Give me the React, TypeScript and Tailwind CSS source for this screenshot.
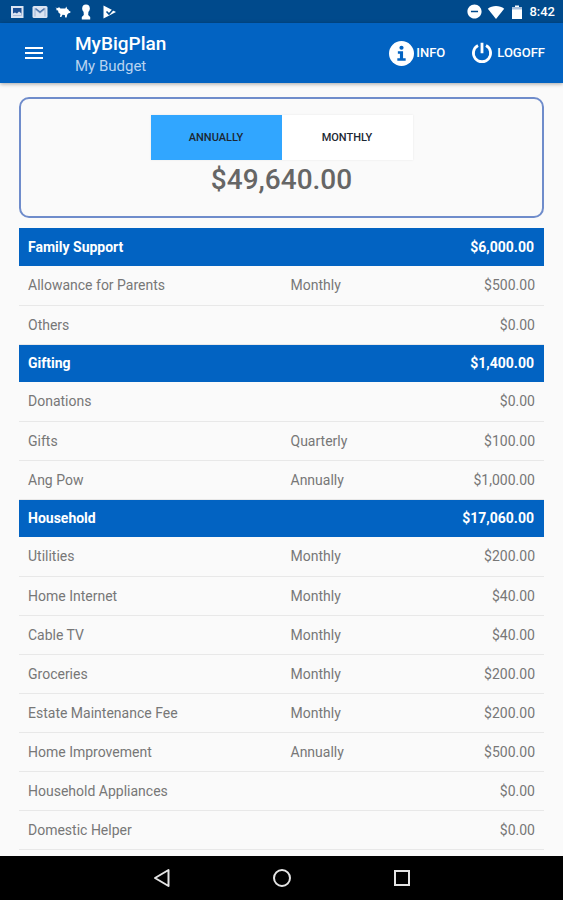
import React, { useState } from 'react';
import { MdMenu, MdRemoveCircle } from 'react-icons/md';

type Period = 'annually' | 'monthly';

interface BudgetItem {
  name: string;
  frequency?: string;
  amount: string;
}

interface BudgetGroup {
  name: string;
  total: string;
  items: BudgetItem[];
}

const groups: BudgetGroup[] = [
  {
    name: 'Family Support',
    total: '$6,000.00',
    items: [
      { name: 'Allowance for Parents', frequency: 'Monthly', amount: '$500.00' },
      { name: 'Others', amount: '$0.00' },
    ],
  },
  {
    name: 'Gifting',
    total: '$1,400.00',
    items: [
      { name: 'Donations', amount: '$0.00' },
      { name: 'Gifts', frequency: 'Quarterly', amount: '$100.00' },
      { name: 'Ang Pow', frequency: 'Annually', amount: '$1,000.00' },
    ],
  },
  {
    name: 'Household',
    total: '$17,060.00',
    items: [
      { name: 'Utilities', frequency: 'Monthly', amount: '$200.00' },
      { name: 'Home Internet', frequency: 'Monthly', amount: '$40.00' },
      { name: 'Cable TV', frequency: 'Monthly', amount: '$40.00' },
      { name: 'Groceries', frequency: 'Monthly', amount: '$200.00' },
      { name: 'Estate Maintenance Fee', frequency: 'Monthly', amount: '$200.00' },
      { name: 'Home Improvement', frequency: 'Annually', amount: '$500.00' },
      { name: 'Household Appliances', amount: '$0.00' },
      { name: 'Domestic Helper', amount: '$0.00' },
    ],
  },
];

const periods: { id: Period; label: string }[] = [
  { id: 'annually', label: 'ANNUALLY' },
  { id: 'monthly', label: 'MONTHLY' },
];

const StatusBar: React.FC = () => (
  <div className="flex h-[23px] items-center justify-between bg-[#004a8c] pl-[9px] pr-2 text-white">
    <div className="flex items-center gap-[7px]">
      {/* picture */}
      <svg viewBox="0 0 16 16" className="h-4 w-4">
        <path d="M2 2h12.500v12H2z" fill="#dbe4f2" />
        <path d="M4 4h8.500v7.500H4z" fill="#1c4f93" />
        <path d="M4 11.600V9.600l2-1.200 2 1.200 2-2.200 2.500 2v2.200z" fill="#dbe4f2" />
      </svg>
      {/* mail */}
      <svg viewBox="0 0 16 16" className="h-4 w-4">
        <rect x="0.5" y="2" width="15" height="12" rx="1.5" fill="#dbe4f2" />
        <path d="M3 12.500V5l5 4 5-4v7.500" fill="none" stroke="#a9bcd9" strokeWidth="1.2" />
        <path d="M3.500 4.500 8 8l4.500-3.500" fill="none" stroke="#4d75aa" strokeWidth="1.4" />
      </svg>
      {/* pig */}
      <svg viewBox="0 0 16 16" className="h-4 w-4" fill="white">
        <path d="M.5 3.200 2 4.200l2.200-.9 1.300 1.200h4.800l1-2 .8 2.200 1.400 1 .6 1.300 1.400.4-.2 1.300-1.800.5-1.200 1.200-.7 3.200h-1.400l-.4-2.600-2.300-.3-1.200 2.200H5l.4-2.800-1.800-1.300-.6-2.400L.8 5.900l1-.7z" />
      </svg>
      {/* keyhole figure */}
      <svg viewBox="0 0 16 16" className="h-4 w-4" fill="white">
        <circle cx="8" cy="4.400" r="3.800" />
        <path d="M5.500 6.500h5l-.3 4.500 2 2V15.500H3.800V13l2-2z" />
      </svg>
      {/* play store check */}
      <svg viewBox="0 0 16 16" className="h-4 w-4">
        <path d="M2.500 1.500 15 8 2.500 14.500z" fill="white" />
        <path d="m5.500 7.500 2.500 2.500 5.500-6" fill="none" stroke="#004a8c" strokeWidth="1.600" />
      </svg>
    </div>
    <div className="flex items-center gap-1">
      <MdRemoveCircle className="h-[17px] w-[17px]" />
      {/* wifi */}
      <svg viewBox="0 0 18 16" className="h-4 w-[18px]" fill="white">
        <path d="M9 15 .8 4.800C3 3 6 2 9 2s6 1 8.200 2.800z" />
      </svg>
      {/* battery */}
      <svg viewBox="0 0 16 16" className="h-4 w-4" fill="white">
        <path d="M6 1.500h4V3h3v12H3V3h3z" />
        <path d="M3 3h10v2.500H3z" fill="#a9c0dc" />
      </svg>
      <span className="text-[13px] leading-4 font-medium">8:42</span>
    </div>
  </div>
);

const AppBar: React.FC = () => (
  <header className="z-10 flex h-[60px] items-center bg-[#0263c2] pl-[22px] pr-[18px] text-white shadow-[0_1px_4px_rgba(0,0,0,0.35)]">
    <button type="button" aria-label="Menu">
      <MdMenu className="h-6 w-6" />
    </button>
    <div className="ml-[29px] flex-1 pt-1">
      <h1 className="text-[19px] leading-[22px] font-medium">MyBigPlan</h1>
      <p className="text-[15px] leading-[22px] text-[#b8d3f0]">My Budget</p>
    </div>
    <div className="flex items-center gap-[26px] text-[13px] font-medium">
      <button type="button" className="flex items-center gap-0.5">
        <svg viewBox="0 0 24 24" className="h-[25px] w-[25px]">
          <circle cx="12" cy="12" r="12" fill="white" />
          <circle cx="12" cy="6.500" r="2" fill="#0263c2" />
          <path d="M8.500 9.800h5v6.700H16V19H8v-2.500h2.500v-4.200h-2z" fill="#0263c2" />
        </svg>
        INFO
      </button>
      <button type="button" className="flex items-center gap-1">
        <svg viewBox="0 0 22 22" className="h-[22px] w-[22px]" fill="none" stroke="currentColor" strokeWidth="2.800">
          <path d="M7 3.500a8.600 8.600 0 1 0 8 0M11 .8v10.400" />
        </svg>
        LOGOFF
      </button>
    </div>
  </header>
);

const NavigationBar: React.FC = () => (
  <nav className="flex h-11 items-center justify-center gap-24 bg-black text-[#e4e4e4]">
    <button type="button" aria-label="Back">
      <svg viewBox="0 0 24 24" className="h-6 w-6" fill="none" stroke="currentColor" strokeWidth="2" strokeLinejoin="round">
        <path d="M18.500 4v16L5 12z" />
      </svg>
    </button>
    <button type="button" aria-label="Home">
      <svg viewBox="0 0 24 24" className="h-6 w-6" fill="none" stroke="currentColor" strokeWidth="2">
        <circle cx="12" cy="12" r="8" />
      </svg>
    </button>
    <button type="button" aria-label="Recent apps">
      <svg viewBox="0 0 24 24" className="h-6 w-6" fill="none" stroke="currentColor" strokeWidth="2">
        <rect x="5" y="5" width="14" height="14" />
      </svg>
    </button>
  </nav>
);

const BudgetTable: React.FC = () => (
  <table className="mt-2.5 w-full table-fixed text-left text-sm text-[#777777]">
    <colgroup>
      <col className="w-1/2" />
      <col className="w-1/4" />
      <col className="w-1/4" />
    </colgroup>
    {groups.map((group) => (
      <tbody key={group.name}>
        <tr className="h-[38px] bg-[#0263c2] text-white">
          <th scope="rowgroup" colSpan={2} className="px-[9px] font-bold">
            {group.name}
          </th>
          <td className="px-[10px] text-right font-bold">{group.total}</td>
        </tr>
        {group.items.map((item) => (
          <tr key={item.name} className="h-[39px] border-b border-[#e8e8e8]">
            <th scope="row" className="px-[9px] font-normal">
              {item.name}
            </th>
            <td className="px-[9px]">{item.frequency}</td>
            <td className="px-[9px] text-right">{item.amount}</td>
          </tr>
        ))}
      </tbody>
    ))}
  </table>
);

const App: React.FC = () => {
  const [period, setPeriod] = useState<Period>('annually');

  const tabClasses = (isActive: boolean) =>
    `h-[45px] w-[131px] pt-0.5 text-[11px] font-medium text-[#1c2733] ${isActive ? 'bg-[#31a6ff]' : 'bg-white'}`;

  return (
    <div className="flex min-h-screen flex-col bg-[#fafafa] font-[Roboto,sans-serif]">
      <StatusBar />
      <AppBar />
      <main className="flex-1 px-[19px] pt-3.5">
        <section className="flex flex-col items-center rounded-[10px] border-2 border-[#6f8ccb] pt-4 pb-5">
          <div className="flex shadow-[0_0_2px_rgba(0,0,0,0.08)]">
            {periods.map((p) => (
              <button
                key={p.id}
                type="button"
                aria-pressed={period === p.id}
                onClick={() => setPeriod(p.id)}
                className={tabClasses(period === p.id)}
              >
                {p.label}
              </button>
            ))}
          </div>
          <p className="mt-1 text-[28px] leading-8 font-medium text-[#666666]">
            {period === 'annually' ? '$49,640.00' : '$4,136.67'}
          </p>
        </section>
        <BudgetTable />
      </main>
      <NavigationBar />
    </div>
  );
};

export default App;
